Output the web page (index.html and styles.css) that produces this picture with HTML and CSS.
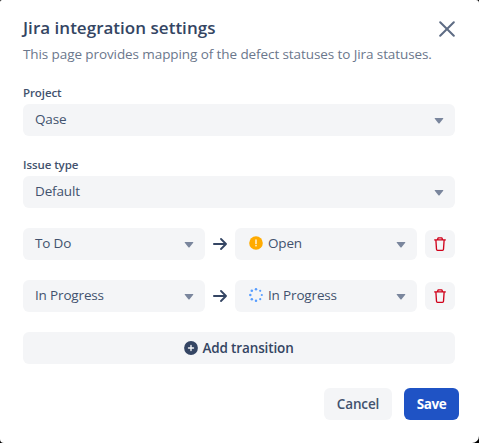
FILE: index.html
```html
<!DOCTYPE html>
<html lang="en">
<head>
<meta charset="utf-8">
<title>Jira integration settings</title>
<link rel="stylesheet" href="styles.css">
</head>
<body>
<svg class="defs" aria-hidden="true">
  <symbol id="caret" viewBox="0 0 10 6"><path d="M1.2 0h7.6q1 0 .4.8L5.6 5.2q-.6.7-1.2 0L.8.8Q.2 0 1.2 0z" fill="#7a869d"/></symbol>
  <symbol id="arrow" viewBox="0 0 14 12"><path d="M.9 6h12M8 1l5 5-5 5" fill="none" stroke="#344563" stroke-width="1.8" stroke-linecap="round" stroke-linejoin="round"/></symbol>
  <symbol id="trash" viewBox="0 0 12 14"><path d="M.7 2.9h10.6M3.4 2.7l.8-1.9h3.6l.8 1.9M1.9 3.2l.6 9.1q.1 1 1 1h5q.9 0 1-1l.6-9.1" fill="none" stroke="#d0021b" stroke-width="1.35" stroke-linecap="round" stroke-linejoin="round"/></symbol>
</svg>
<main class="dialog">
  <header class="header">
    <div>
      <h1 class="title">Jira integration settings</h1>
      <p class="subtitle">This page provides mapping of the defect statuses to Jira statuses.</p>
    </div>
    <svg class="close" viewBox="0 0 16 16"><path d="M1.2 1.2l13.6 13.6M14.8 1.2L1.2 14.8" fill="none" stroke="#5e6c84" stroke-width="2" stroke-linecap="round"/></svg>
  </header>
  <section class="field">
    <div class="label">Project</div>
    <div class="select"><span>Qase</span><svg class="caret"><use href="#caret"/></svg></div>
  </section>
  <section class="field">
    <div class="label">Issue type</div>
    <div class="select"><span>Default</span><svg class="caret"><use href="#caret"/></svg></div>
  </section>
  <div class="transition">
    <div class="select"><span>To Do</span><svg class="caret"><use href="#caret"/></svg></div>
    <svg class="arrow"><use href="#arrow"/></svg>
    <div class="select status">
      <svg class="state" viewBox="0 0 14 14"><circle cx="7" cy="7" r="6.8" fill="#ffab00"/><path d="M7 4v3.7" stroke="#fff" stroke-width="1.3" stroke-linecap="round"/><circle cx="7" cy="9.8" r=".8" fill="#fff"/></svg>
      <span>Open</span><svg class="caret"><use href="#caret"/></svg>
    </div>
    <button class="delete" aria-label="Delete"><svg class="trash"><use href="#trash"/></svg></button>
  </div>
  <div class="transition">
    <div class="select"><span>In Progress</span><svg class="caret"><use href="#caret"/></svg></div>
    <svg class="arrow"><use href="#arrow"/></svg>
    <div class="select status">
      <svg class="state" viewBox="0 0 14 14" fill="#579dff"><circle cx="7" cy="1.3" r="1.25"/><circle cx="11.2" cy="2.8" r="1.1"/><circle cx="12.8" cy="7" r="1.1"/><circle cx="11.2" cy="11.2" r="1.1"/><circle cx="7" cy="12.8" r="1.25"/><circle cx="2.8" cy="11.2" r="1.25"/><circle cx="1.3" cy="7" r="1.25"/><circle cx="2.8" cy="2.8" r="1.3"/></svg>
      <span>In Progress</span><svg class="caret"><use href="#caret"/></svg>
    </div>
    <button class="delete" aria-label="Delete"><svg class="trash"><use href="#trash"/></svg></button>
  </div>
  <button class="button add"><svg class="plus" viewBox="0 0 14 14"><circle cx="7" cy="7" r="6.9" fill="#344563"/><path d="M7 4.5v5M4.5 7h5" stroke="#f4f5f7" stroke-width="1.4" stroke-linecap="round"/></svg><span>Add transition</span></button>
  <footer class="footer">
    <button class="button cancel">Cancel</button>
    <button class="button save">Save</button>
  </footer>
</main>
</body>
</html>
```
FILE: styles.css
```css
* { box-sizing: border-box; }
body { margin: 0; background: #000; font-family: "Open Sans", "Noto Sans", sans-serif; font-size: 13.5px; color: #42526e; }
svg { display: block; flex: none; }
.defs { width: 0; height: 0; position: absolute; }
.dialog { width: 479px; height: 443px; padding: 17px 24px 0 23px; background: #fff; border-radius: 2px 3px 7px 4px; overflow: hidden; }
.header { display: flex; justify-content: space-between; height: 67px; }
.title { margin: 0; font-size: 17px; font-weight: 600; line-height: 22px; letter-spacing: .02px; color: #344563; white-space: nowrap; }
.subtitle { margin: 4px 0 0; font-size: 13.5px; line-height: 22px; letter-spacing: -.09px; color: #6b778c; white-space: nowrap; }
.close { width: 16px; height: 16px; margin-top: 4px; }
.field { margin-bottom: 20px; }
.label { height: 20px; font-size: 11.5px; font-weight: 600; line-height: 18px; letter-spacing: -.08px; color: #42526e; }
.select { display: flex; align-items: center; height: 32px; padding: 0 11.5px 0 12px; border-radius: 6px; background: #f4f5f7; line-height: 30px; letter-spacing: -.16px; white-space: nowrap; }
.select span { height: 32px; }
.caret { width: 10px; height: 6px; margin: 2px 0 0 auto; }
.transition { display: grid; grid-template-columns: 182px 14px 182px 30px; column-gap: 8px; align-items: center; width: 432px; margin-bottom: 20px; }
.arrow { width: 14px; height: 12px; }
.status { padding-left: 13.5px; }
.state { width: 14px; height: 14px; margin: -2px 5.5px 0 0; }
.delete { display: flex; align-items: center; justify-content: center; height: 28px; padding: 0; border: 0; border-radius: 6px; background: #f4f5f7; }
.trash { width: 12px; height: 14px; }
.button { display: flex; align-items: center; justify-content: center; height: 32px; padding: 0; border: 0; border-radius: 6px; background: #f4f5f7; font: 600 13.5px/30px "Open Sans", "Noto Sans", sans-serif; letter-spacing: -.13px; color: #42526e; white-space: nowrap; }
.add { width: 432px; gap: 4px; color: #344563; }
.plus { width: 14px; height: 14px; }
.footer { display: flex; justify-content: flex-end; gap: 12px; margin: 24px -4px 0 0; }
.cancel { width: 68px; }
.save { width: 55px; background: #1f53c5; color: #fff; font-weight: 700; letter-spacing: -.4px; }
```
